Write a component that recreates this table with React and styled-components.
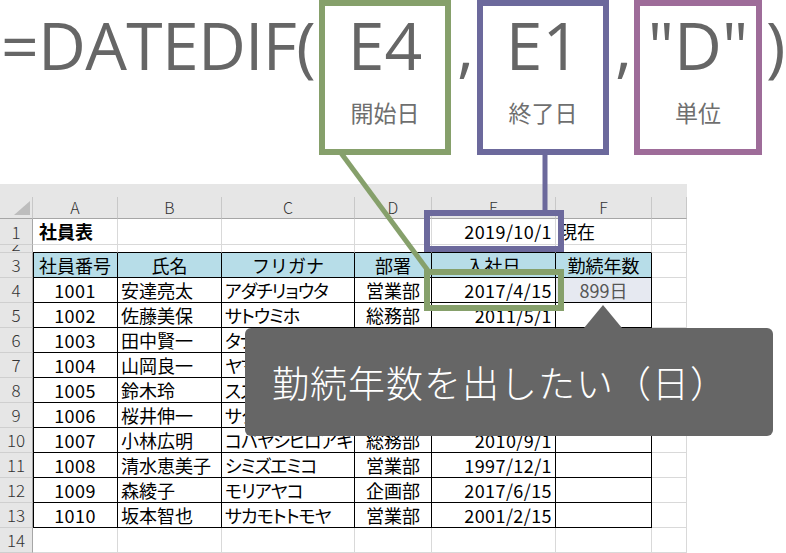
import React from "react";
import styled, { createGlobalStyle } from "styled-components";

const GREEN = "#86a06b";
const PURPLE = "#6c699c";
const PINK = "#9e6c99";
const CJK = `"Noto Sans CJK JP", "Noto Sans", sans-serif`;

const Global = createGlobalStyle`
  *, *::before, *::after { box-sizing: border-box; }
  html, body { margin: 0; padding: 0; background: #fff; }
  body { width: 786px; height: 553px; overflow: hidden; }
`;

const Page = styled.div`
  position: relative;
  width: 786px;
  height: 553px;
  overflow: hidden;
  background: #fff;
`;

/* ---------- formula ---------- */
const Formula = styled.div`
  display: flex;
  align-items: flex-start;
  height: 184px;
  color: #666;
  font-family: "Open Sans", "Liberation Sans", sans-serif;
`;

const FnText = styled.div`
  flex: none;
  width: ${(p) => p.$w}px;
  padding-left: ${(p) => p.$pl || 0}px;
  padding-top: 11px;
  font-size: 66px;
  line-height: 66px;
  letter-spacing: -0.7px;
  white-space: nowrap;
`;

const ArgBox = styled.div`
  flex: none;
  width: ${(p) => p.$w}px;
  height: 155px;
  border: 6px solid ${(p) => p.$color};
  display: flex;
  flex-direction: column;
  align-items: center;
`;

const ArgValue = styled.div`
  padding-top: 5px;
  font-size: 66px;
  line-height: 66px;
  white-space: nowrap;
`;

const ArgLabel = styled.div`
  margin-top: 21px;
  font-family: ${CJK};
  font-size: 23px;
  line-height: 28px;
  color: #6f6f6f;
`;

/* ---------- sheet ---------- */
const Sheet = styled.div`
  width: 687px;
`;

const TopStrip = styled.div`
  height: 13px;
  background: #e6e6e6;
`;

const Grid = styled.div`
  display: grid;
  grid-template-columns: 33px 85px 104px 133px 77px 124px 96px 35px;
  grid-template-rows: 22px 26px 8px repeat(12, 25px);
`;

const Corner = styled.div`
  background: #e6e6e6;
  border-right: 1px solid #c8c8c8;
  border-bottom: 1px solid #a6a6a6;
  display: flex;
  justify-content: flex-end;
  align-items: flex-end;
  padding: 0 2px 3px 0;
`;

const SelectAll = styled.div`
  width: 0;
  height: 0;
  border-left: 16px solid transparent;
  border-bottom: 14px solid #bdbdbd;
`;

const ColHead = styled.div`
  background: #e6e6e6;
  border-right: 1px solid #c8c8c8;
  border-bottom: 1px solid #a6a6a6;
  font-family: ${CJK};
  font-size: 16px;
  line-height: 21px;
  color: #333;
  text-align: center;
  font-weight: 300;
`;

const RowHead = styled.div`
  background: #e6e6e6;
  border-right: 1px solid #a6a6a6;
  border-bottom: 1px solid #cfcfcf;
  font-family: ${CJK};
  font-size: 17px;
  line-height: ${(p) => (p.$short ? "16px" : "24px")};
  color: #333;
  font-weight: 300;
  text-align: center;
  overflow: hidden;
  display: flex;
  justify-content: center;
  align-items: flex-end;
`;

const Cell = styled.div`
  background: ${(p) => p.$bg || "#fff"};
  border-right: 1px solid ${(p) => (p.$boxed ? "#000" : "#d9d9d9")};
  border-bottom: 1px solid ${(p) => (p.$boxedBottom || p.$boxed ? "#000" : "#d9d9d9")};
  box-shadow: ${(p) => (p.$leftEdge ? "inset 1px 0 0 #000" : "none")};
  font-family: ${CJK};
  font-size: 18px;
  line-height: 24px;
  font-weight: ${(p) => (p.$bold ? 700 : 400)};
  color: ${(p) => p.$color || "#000"};
  text-align: ${(p) => p.$align || "left"};
  padding: 0 ${(p) => (p.$pr != null ? p.$pr : 3)}px 0 ${(p) => (p.$pl != null ? p.$pl : 3)}px;
  font-feature-settings: ${(p) => (p.$kana ? '"palt"' : "normal")};
  letter-spacing: ${(p) => (p.$kana ? "-1px" : p.$num ? "0.4px" : "0")};
  white-space: nowrap;
  overflow: hidden;
`;

/* ---------- overlays ---------- */
const Lines = styled.svg`
  position: absolute;
  left: 0;
  top: 0;
  pointer-events: none;
`;

const Highlight = styled.div`
  position: absolute;
  left: ${(p) => p.$x}px;
  top: ${(p) => p.$y}px;
  width: 140px;
  height: 42px;
  border: 6px solid ${(p) => p.$color};
  pointer-events: none;
`;

const Tooltip = styled.div`
  position: absolute;
  left: 245px;
  top: 328px;
  width: 528px;
  height: 108px;
  background: #666;
  border-radius: 6px;
  display: flex;
  align-items: center;
  padding-left: 27px;
  color: #fff;
  font-family: ${CJK};
  font-size: 37px;
  font-weight: 300;
  letter-spacing: 1px;

  &::before {
    content: "";
    position: absolute;
    left: 339px;
    top: -23px;
    border-left: 19px solid transparent;
    border-right: 19px solid transparent;
    border-bottom: 23px solid #666;
  }
`;

const COLS = ["A", "B", "C", "D", "E", "F", ""];

const DATA = [
  ["1001", "安達亮太", "アダチリョウタ", "営業部", "2017/4/15", "899日"],
  ["1002", "佐藤美保", "サトウミホ", "総務部", "2011/5/1", ""],
  ["1003", "田中賢一", "タナカケンイチ", "企画部", "2015/4/1", ""],
  ["1004", "山岡良一", "ヤマオカリョウイチ", "営業部", "2008/4/1", ""],
  ["1005", "鈴木玲", "スズキレイ", "総務部", "2013/10/1", ""],
  ["1006", "桜井伸一", "サクライシンイチ", "企画部", "2016/4/1", ""],
  ["1007", "小林広明", "コバヤシヒロアキ", "総務部", "2010/9/1", ""],
  ["1008", "清水恵美子", "シミズエミコ", "営業部", "1997/12/1", ""],
  ["1009", "森綾子", "モリアヤコ", "企画部", "2017/6/15", ""],
  ["1010", "坂本智也", "サカモトトモヤ", "営業部", "2001/2/15", ""],
];

const HEAD = ["社員番号", "氏名", "フリガナ", "部署", "入社日", "勤続年数"];
const ALIGN = ["center", "left", "left", "center", "right", "center"];

export default function App() {
  return (
    <Page>
      <Global />
      <Formula>
        <FnText $w={319} $pl={1}>=DATEDIF(</FnText>
        <ArgBox $w={132} $color={GREEN}>
          <ArgValue>E4</ArgValue>
          <ArgLabel>開始日</ArgLabel>
        </ArgBox>
        <FnText $w={26} $pl={6}>,</FnText>
        <ArgBox $w={132} $color={PURPLE}>
          <ArgValue>E1</ArgValue>
          <ArgLabel>終了日</ArgLabel>
        </ArgBox>
        <FnText $w={25} $pl={6}>,</FnText>
        <ArgBox $w={128} $color={PINK}>
          <ArgValue>"D"</ArgValue>
          <ArgLabel>単位</ArgLabel>
        </ArgBox>
        <FnText $w={24} $pl={4}>)</FnText>
      </Formula>

      <Sheet>
        <TopStrip />
        <Grid>
          <Corner>
            <SelectAll />
          </Corner>
          {COLS.map((c, i) => (
            <ColHead key={i}>{c}</ColHead>
          ))}

          <RowHead>1</RowHead>
          <Cell $bold $pl={6}>社員表</Cell>
          <Cell />
          <Cell />
          <Cell />
          <Cell $align="right" $num>2019/10/1</Cell>
          <Cell>現在</Cell>
          <Cell />

          <RowHead $short>2</RowHead>
          {HEAD.map((h) => (
            <Cell key={h} $boxedBottom />
          ))}
          <Cell />

          <RowHead>3</RowHead>
          {HEAD.map((h, i) => (
            <Cell key={h} $boxed $leftEdge={i === 0} $bg="#b7dde8" $align="center" $pl={0} $pr={0}>
              {h}
            </Cell>
          ))}
          <Cell />

          {DATA.map((row, r) => (
            <React.Fragment key={row[0]}>
              <RowHead>{r + 4}</RowHead>
              {row.map((v, i) => (
                <Cell
                  key={i}
                  $boxed
                  $leftEdge={i === 0}
                  $align={ALIGN[i]}
                  $kana={i === 2}
                  $num={i === 0 || i === 4}
                  $bg={i === 5 && r === 0 ? "#e6e9f1" : undefined}
                  $color={i === 5 ? "#555" : undefined}
                >
                  {v}
                </Cell>
              ))}
              <Cell />
            </React.Fragment>
          ))}

          <RowHead>14</RowHead>
          {HEAD.map((h) => (
            <Cell key={h} />
          ))}
          <Cell />
        </Grid>
      </Sheet>

      <Lines width="786" height="553" viewBox="0 0 786 553">
        <line x1="341" y1="153" x2="429" y2="272" stroke={GREEN} strokeWidth="5" />
        <line x1="545" y1="155" x2="545" y2="212" stroke={PURPLE} strokeWidth="5" />
      </Lines>
      <Highlight $x={424} $y={210} $color={PURPLE} />
      <Highlight $x={424} $y={269} $color={GREEN} />

      <Tooltip>勤続年数を出したい（日）</Tooltip>
    </Page>
  );
}
